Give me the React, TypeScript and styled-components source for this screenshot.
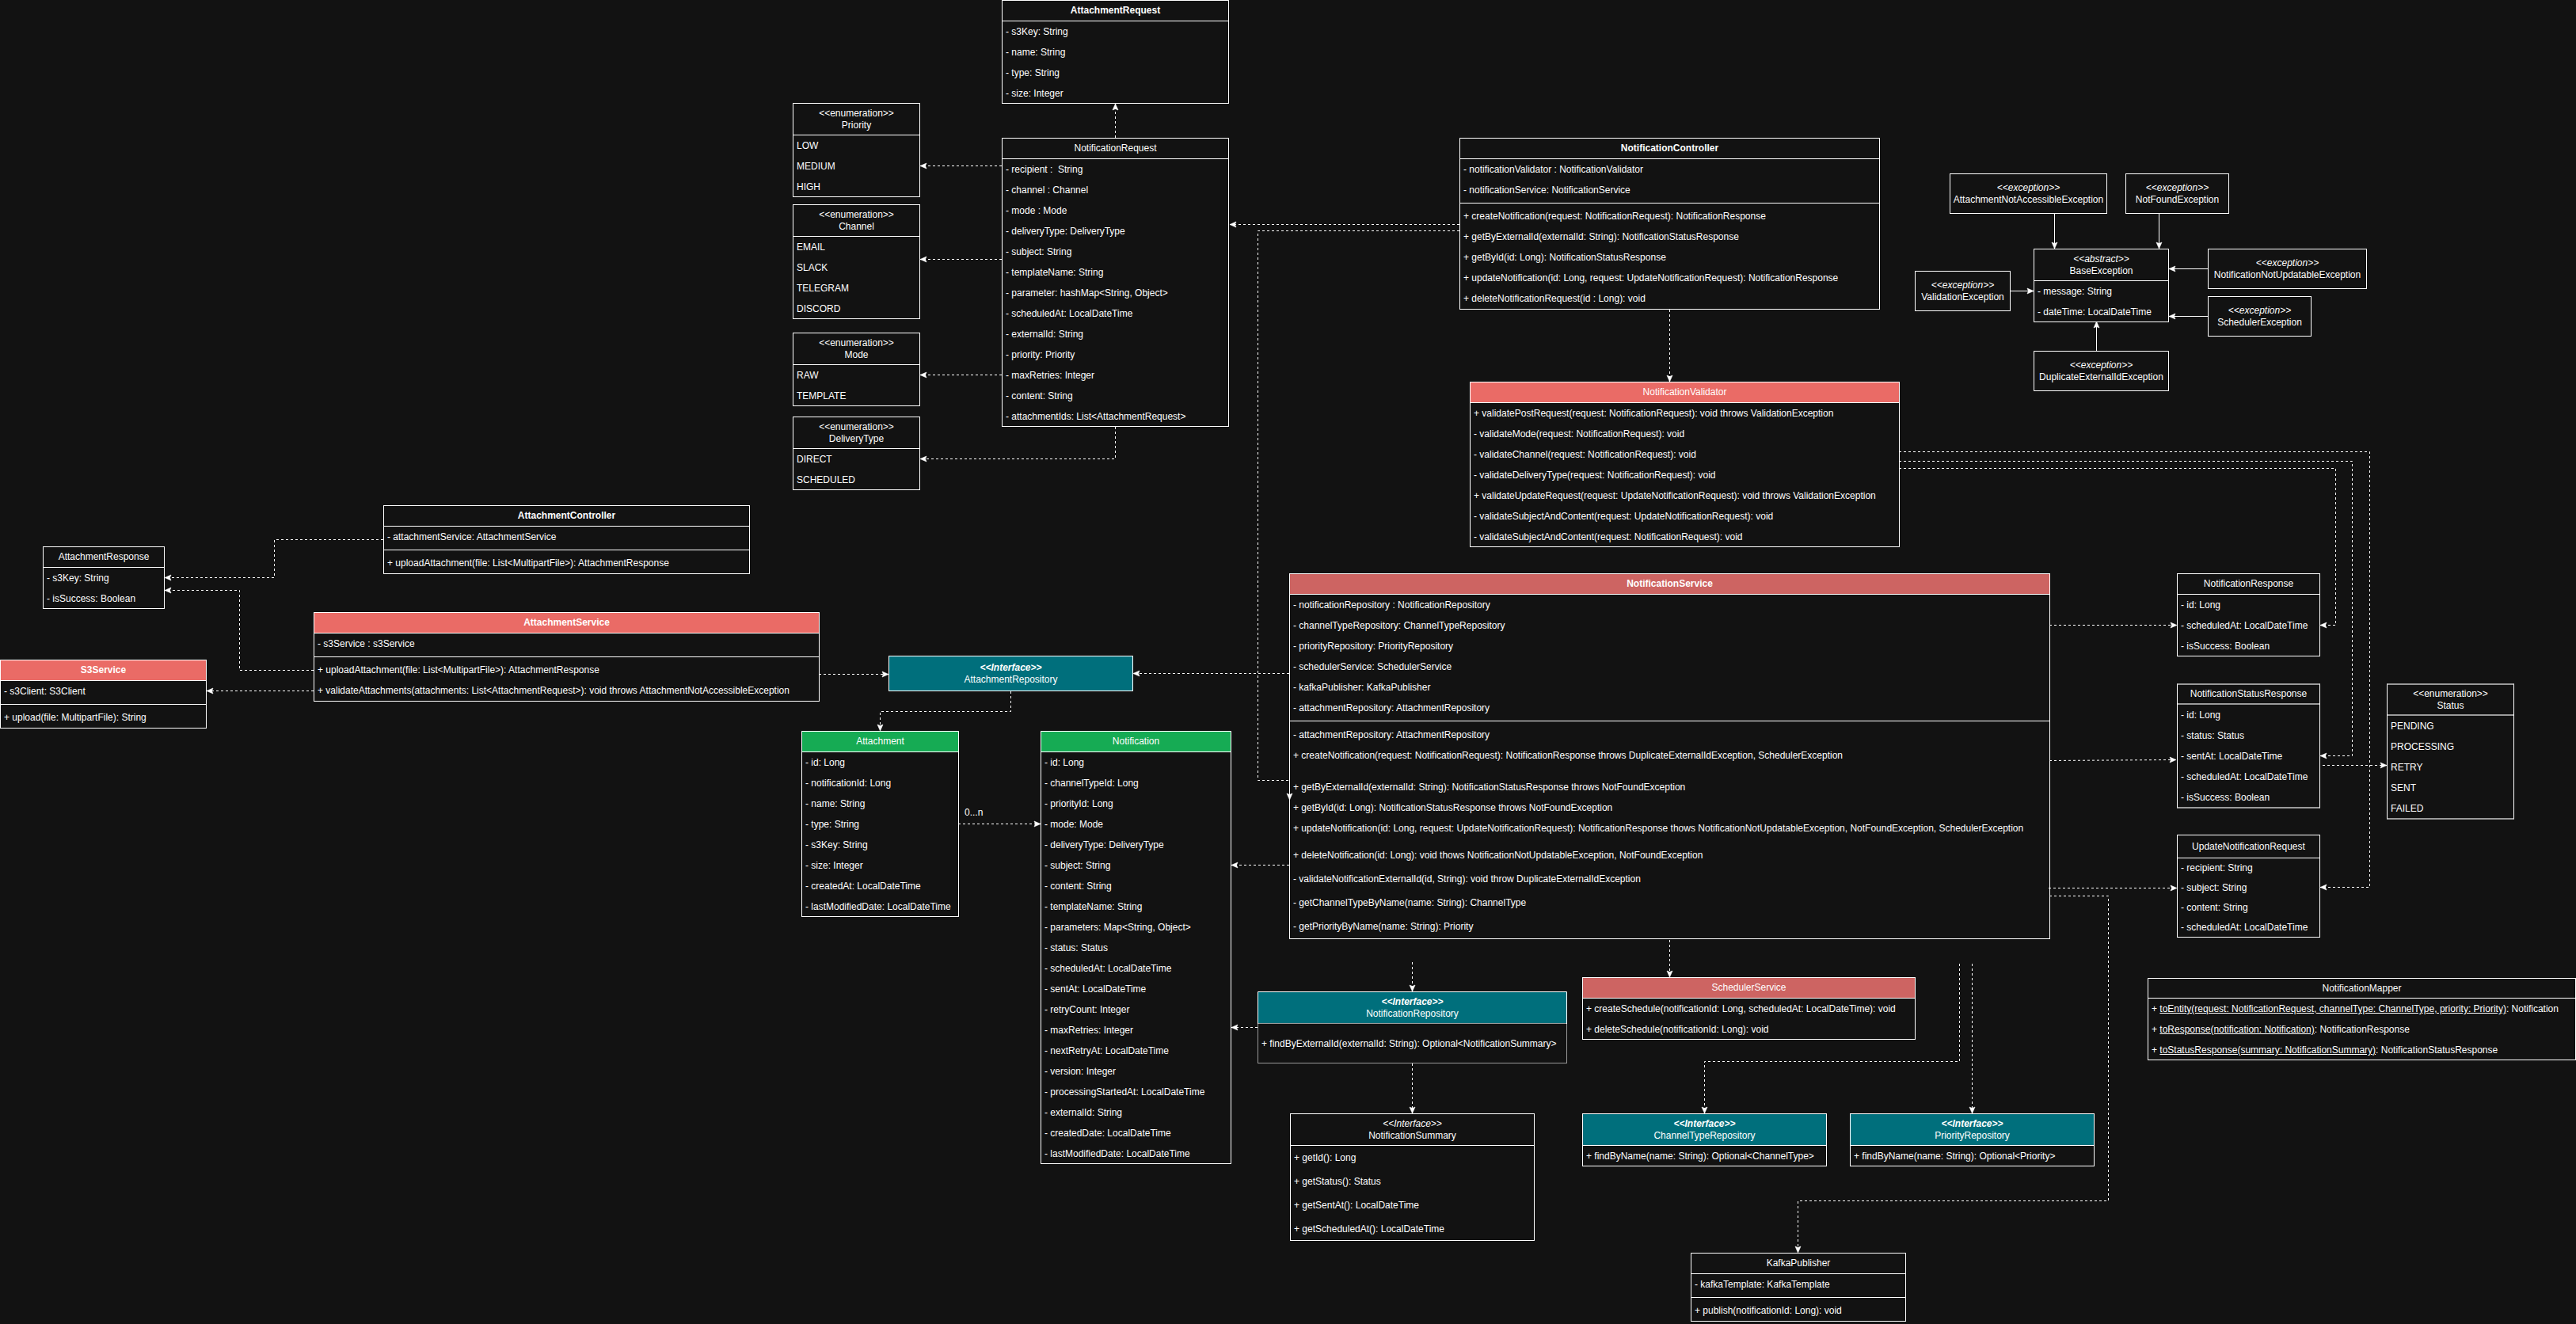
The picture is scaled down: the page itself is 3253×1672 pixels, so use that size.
import React from 'react';
import styled, { createGlobalStyle, css } from 'styled-components';

type Tone = 'plain' | 'red' | 'rust' | 'teal' | 'green';
type Edge = 'solid' | 'soft' | 'dim';

const HEAD_COLORS: Record<Tone, string> = {
  plain: 'transparent',
  red: '#ea6b66',
  rust: '#cd6462',
  teal: '#006f7c',
  green: '#16ab54',
};

const HEAD_RULES: Record<Edge, string> = {
  solid: '1px solid #fff',
  soft: '2px solid #9a9a9a',
  dim: '1px solid #999',
};

const GlobalStyle = createGlobalStyle`
  html, body {
    margin: 0;
    padding: 0;
    background: #121212;
  }
`;

const Canvas = styled.div`
  position: relative;
  width: 3253px;
  height: 1672px;
  overflow: hidden;
  background: #121212;
  color: #fff;
  font-family: "Liberation Sans", Arial, sans-serif;
  font-size: 12px;
`;

const Wires = styled.svg`
  position: absolute;
  inset: 0;
  pointer-events: none;
`;

const Box = styled.div<{ $x: number; $y: number; $w: number; $edge: Edge }>`
  position: absolute;
  left: ${p => p.$x}px;
  top: ${p => p.$y}px;
  width: ${p => p.$w}px;
  box-sizing: border-box;
  display: flex;
  flex-direction: column;
  border: 1px solid #fff;
  background: #121212;
  ${p => p.$edge === 'soft' && css`
    border-top: 2px solid #9a9a9a;
    border-bottom: 2px solid #9a9a9a;
  `}
  ${p => p.$edge === 'dim' && css`
    border-color: #fff #999 #999 #999;
  `}
`;

const Head = styled.div<{ $h: number; $tone: Tone; $bold?: boolean; $edge: Edge; $closed: boolean }>`
  box-sizing: border-box;
  height: ${p => (p.$closed || p.$edge === 'soft' ? p.$h - 1 : p.$h)}px;
  flex: none;
  display: flex;
  flex-direction: column;
  align-items: center;
  justify-content: center;
  line-height: 15px;
  white-space: nowrap;
  background: ${p => HEAD_COLORS[p.$tone]};
  font-weight: ${p => (p.$bold ? 700 : 400)};
  border-bottom: ${p => (p.$closed ? 'none' : HEAD_RULES[p.$edge])};
  ${p => p.$edge === 'dim' && css`
    box-shadow: -1px 0 0 #fff, 1px 0 0 #fff;
  `}
`;

const Stereotype = styled.span<{ $bold?: boolean; $italic?: boolean }>`
  font-style: ${p => (p.$italic ? 'italic' : 'normal')};
  font-weight: ${p => (p.$bold ? 700 : 400)};
`;

const Members = styled.div<{ $tail?: number }>`
  display: flex;
  flex-direction: column;
  padding-bottom: ${p => p.$tail ?? 0}px;

  &:last-child {
    margin-bottom: -1px;
  }

  & + & {
    margin-top: 3px;
    margin-bottom: 0;
    padding-top: 3px;
    border-top: 1px solid #fff;
  }
`;

const Row = styled.div<{ $h: number; $gap?: number }>`
  height: ${p => p.$h}px;
  line-height: ${p => p.$h}px;
  margin-top: ${p => p.$gap ?? 0}px;
  padding-left: 4px;
  white-space: pre;
`;

const Multiplicity = styled.span`
  position: absolute;
  left: 1218px;
  top: 1019px;
  line-height: 15px;
`;

interface ClassBoxProps {
  x: number;
  y: number;
  w: number;
  title: string;
  stereotype?: string;
  stereoItalic?: boolean;
  stereoBold?: boolean;
  head?: number;
  tone?: Tone;
  bold?: boolean;
  edge?: Edge;
  rowH?: number;
  attrs?: React.ReactNode[];
  methods?: React.ReactNode[];
  methodGaps?: number[];
  tail?: number;
}

const ClassBox: React.FC<ClassBoxProps> = ({
  x,
  y,
  w,
  title,
  stereotype,
  stereoItalic,
  stereoBold,
  head = 26,
  tone = 'plain',
  bold,
  edge = 'solid',
  rowH = 26,
  attrs,
  methods,
  methodGaps,
  tail,
}) => {
  const closed = !attrs && !methods;
  return (
    <Box $x={x} $y={y} $w={w} $edge={edge}>
      <Head $h={head} $tone={tone} $bold={bold} $edge={edge} $closed={closed}>
        {stereotype && (
          <Stereotype $italic={stereoItalic} $bold={stereoBold}>
            {stereotype}
          </Stereotype>
        )}
        <span>{title}</span>
      </Head>
      {attrs && (
        <Members>
          {attrs.map((text, i) => (
            <Row key={i} $h={rowH}>{text}</Row>
          ))}
        </Members>
      )}
      {methods && (
        <Members $tail={tail}>
          {methods.map((text, i) => (
            <Row key={i} $h={rowH} $gap={methodGaps?.[i]}>{text}</Row>
          ))}
        </Members>
      )}
    </Box>
  );
};

// every wire ends on the arrow tip
const Wire: React.FC<{ points: [number, number][]; solid?: boolean }> = ({ points, solid }) => {
  const [tx, ty] = points[points.length - 1];
  const [px, py] = points[points.length - 2];
  const len = Math.hypot(tx - px, ty - py);
  const ux = (tx - px) / len;
  const uy = (ty - py) / len;
  const at = (back: number, side: number) =>
    `${tx - ux * back - uy * side},${ty - uy * back + ux * side}`;
  return (
    <g>
      <polyline
        points={points.map(p => p.join(',')).join(' ')}
        fill="none"
        stroke="#fff"
        strokeWidth={1}
        strokeDasharray={solid ? undefined : '3 3'}
      />
      <polygon points={`${tx},${ty} ${at(8, 3.5)} ${at(6.5, 0)} ${at(8, -3.5)}`} fill="#fff" stroke="#fff" strokeWidth={0.6} />
    </g>
  );
};

const DASHED: [number, number][][] = [
  [[1408.5, 174], [1408.5, 131]],
  [[1265, 209.5], [1162, 209.5]],
  [[1265, 327.5], [1162, 327.5]],
  [[1265, 473.5], [1162, 473.5]],
  [[1408.5, 539], [1408.5, 579.5], [1162, 579.5]],
  [[1843, 283.5], [1553, 283.5]],
  [[1843, 291.5], [1588.5, 291.5], [1588.5, 985.5], [1628.5, 985.5], [1628.5, 1010]],
  [[2108.5, 391], [2108.5, 482]],
  [[2398, 570.5], [2992.5, 570.5], [2992.5, 1120.5], [2930, 1120.5]],
  [[2398, 582.5], [2970.5, 582.5], [2970.5, 954.5], [2930, 954.5]],
  [[2398, 591.5], [2949.5, 591.5], [2949.5, 789.5], [2930, 789.5]],
  [[2588, 789.5], [2749, 789.5]],
  [[2588, 960.5], [2748, 959.5]],
  [[2587, 1121.5], [2749, 1121.5]],
  [[2933, 966.5], [3014, 966.5]],
  [[2588, 1131.5], [2662.5, 1131.5], [2662.5, 1516.5], [2270.5, 1516.5], [2270.5, 1582]],
  [[2108.5, 1187], [2108.5, 1234]],
  [[1783.5, 1215], [1783.5, 1252]],
  [[1783.5, 1343], [1783.5, 1406]],
  [[2474.5, 1217], [2474.5, 1340.5], [2152.5, 1340.5], [2152.5, 1406]],
  [[2490.5, 1217], [2490.5, 1406]],
  [[1628, 850.5], [1431, 850.5]],
  [[1034, 851.5], [1122, 851.5]],
  [[1276.5, 873], [1276.5, 898.5], [1111.5, 898.5], [1111.5, 923]],
  [[1210, 1040.5], [1314, 1040.5]],
  [[1628, 1092.5], [1555, 1092.5]],
  [[1588, 1297.5], [1555, 1297.5]],
  [[484, 681.5], [346.5, 681.5], [346.5, 729.5], [208, 729.5]],
  [[396, 846.5], [302.5, 846.5], [302.5, 745.5], [208, 745.5]],
  [[396, 872.5], [261, 872.5]],
];

const SOLID: [number, number][][] = [
  [[2594.5, 269], [2594.5, 314]],
  [[2726.5, 269], [2726.5, 314]],
  [[2788, 339.5], [2739, 339.5]],
  [[2788, 399.5], [2739, 399.5]],
  [[2538, 367.5], [2568, 367.5]],
  [[2647.5, 443], [2647.5, 406]],
];

const App: React.FC = () => (
  <Canvas>
    <GlobalStyle />

    {/* request models and enums */}
    <ClassBox x={1265} y={0} w={287} title="AttachmentRequest" bold
      attrs={['- s3Key: String', '- name: String', '- type: String', '- size: Integer']} />
    <ClassBox x={1265} y={174} w={287} title="NotificationRequest"
      attrs={[
        '- recipient :  String',
        '- channel : Channel',
        '- mode : Mode',
        '- deliveryType: DeliveryType',
        '- subject: String',
        '- templateName: String',
        '- parameter: hashMap<String, Object>',
        '- scheduledAt: LocalDateTime',
        '- externalId: String',
        '- priority: Priority',
        '- maxRetries: Integer',
        '- content: String',
        '- attachmentIds: List<AttachmentRequest>',
      ]} />
    <ClassBox x={1001} y={130} w={161} head={40} stereotype="<<enumeration>>" title="Priority"
      attrs={['LOW', 'MEDIUM', 'HIGH']} />
    <ClassBox x={1001} y={258} w={161} head={40} stereotype="<<enumeration>>" title="Channel"
      attrs={['EMAIL', 'SLACK', 'TELEGRAM', 'DISCORD']} />
    <ClassBox x={1001} y={420} w={161} head={40} stereotype="<<enumeration>>" title="Mode"
      attrs={['RAW', 'TEMPLATE']} />
    <ClassBox x={1001} y={526} w={161} head={40} stereotype="<<enumeration>>" title="DeliveryType"
      attrs={['DIRECT', 'SCHEDULED']} />

    {/* attachment side */}
    <ClassBox x={484} y={638} w={463} title="AttachmentController" bold
      attrs={['- attachmentService: AttachmentService']}
      methods={['+ uploadAttachment(file: List<MultipartFile>): AttachmentResponse']} />
    <ClassBox x={54} y={690} w={154} title="AttachmentResponse"
      attrs={['- s3Key: String', '- isSuccess: Boolean']} />
    <ClassBox x={396} y={773} w={639} title="AttachmentService" tone="red" bold
      attrs={['- s3Service : s3Service']}
      methods={[
        '+ uploadAttachment(file: List<MultipartFile>): AttachmentResponse',
        '+ validateAttachments(attachments: List<AttachmentRequest>): void throws AttachmentNotAccessibleException',
      ]} />
    <ClassBox x={0} y={833} w={261} title="S3Service" tone="red" bold
      attrs={['- s3Client: S3Client']}
      methods={['+ upload(file: MultipartFile): String']} />
    <ClassBox x={1122} y={828} w={309} head={44} tone="teal" stereotype="<<Interface>>" stereoItalic stereoBold
      title="AttachmentRepository" />
    <ClassBox x={1012} y={923} w={199} title="Attachment" tone="green"
      attrs={[
        '- id: Long',
        '- notificationId: Long',
        '- name: String',
        '- type: String',
        '- s3Key: String',
        '- size: Integer',
        '- createdAt: LocalDateTime',
        '- lastModifiedDate: LocalDateTime',
      ]} />
    <ClassBox x={1314} y={923} w={241} title="Notification" tone="green"
      attrs={[
        '- id: Long',
        '- channelTypeId: Long',
        '- priorityId: Long',
        '- mode: Mode',
        '- deliveryType: DeliveryType',
        '- subject: String',
        '- content: String',
        '- templateName: String',
        '- parameters: Map<String, Object>',
        '- status: Status',
        '- scheduledAt: LocalDateTime',
        '- sentAt: LocalDateTime',
        '- retryCount: Integer',
        '- maxRetries: Integer',
        '- nextRetryAt: LocalDateTime',
        '- version: Integer',
        '- processingStartedAt: LocalDateTime',
        '- externalId: String',
        '- createdDate: LocalDateTime',
        '- lastModifiedDate: LocalDateTime',
      ]} />
    <Multiplicity>0...n</Multiplicity>

    {/* notification api */}
    <ClassBox x={1843} y={174} w={531} title="NotificationController" bold
      attrs={['- notificationValidator : NotificationValidator', '- notificationService: NotificationService']}
      methods={[
        '+ createNotification(request: NotificationRequest): NotificationResponse',
        '+ getByExternalId(externalId: String): NotificationStatusResponse',
        '+ getById(id: Long): NotificationStatusResponse',
        '+ updateNotification(id: Long, request: UpdateNotificationRequest): NotificationResponse',
        '+ deleteNotificationRequest(id : Long): void',
      ]} />
    <ClassBox x={1856} y={482} w={543} title="NotificationValidator" tone="red"
      attrs={[
        '+ validatePostRequest(request: NotificationRequest): void throws ValidationException',
        '- validateMode(request: NotificationRequest): void',
        '- validateChannel(request: NotificationRequest): void',
        '- validateDeliveryType(request: NotificationRequest): void',
        '+ validateUpdateRequest(request: UpdateNotificationRequest): void throws ValidationException',
        '- validateSubjectAndContent(request: UpdateNotificationRequest): void',
        '- validateSubjectAndContent(request: NotificationRequest): void',
      ]} />
    <ClassBox x={1628} y={724} w={961} title="NotificationService" tone="rust" bold
      attrs={[
        '- notificationRepository : NotificationRepository',
        '- channelTypeRepository: ChannelTypeRepository',
        '- priorityRepository: PriorityRepository',
        '- schedulerService: SchedulerService',
        '- kafkaPublisher: KafkaPublisher',
        '- attachmentRepository: AttachmentRepository',
      ]}
      methods={[
        '- attachmentRepository: AttachmentRepository',
        '+ createNotification(request: NotificationRequest): NotificationResponse throws DuplicateExternalIdException, SchedulerException',
        '+ getByExternalId(externalId: String): NotificationStatusResponse throws NotFoundException',
        '+ getById(id: Long): NotificationStatusResponse throws NotFoundException',
        '+ updateNotification(id: Long, request: UpdateNotificationRequest): NotificationResponse thows NotificationNotUpdatableException, NotFoundException, SchedulerException',
        '+ deleteNotification(id: Long): void thows NotificationNotUpdatableException, NotFoundException',
        '- validateNotificationExternalId(id, String): void throw DuplicateExternalIdException',
        '- getChannelTypeByName(name: String): ChannelType',
        '- getPriorityByName(name: String): Priority',
      ]}
      methodGaps={[1, 0, 14, 0, 0, 8, 4, 4, 4]}
      tail={2} />

    {/* exceptions */}
    <ClassBox x={2462} y={219} w={199} head={50} stereotype="<<exception>>" stereoItalic title="AttachmentNotAccessibleException" />
    <ClassBox x={2684} y={219} w={131} head={50} stereotype="<<exception>>" stereoItalic title="NotFoundException" />
    <ClassBox x={2568} y={314} w={171} head={40} stereotype="<<abstract>>" stereoItalic title="BaseException"
      attrs={['- message: String', '- dateTime: LocalDateTime']} />
    <ClassBox x={2418} y={342} w={121} head={50} stereotype="<<exception>>" stereoItalic title="ValidationException" />
    <ClassBox x={2788} y={314} w={201} head={50} stereotype="<<exception>>" stereoItalic title="NotificationNotUpdatableException" />
    <ClassBox x={2788} y={374} w={131} head={50} stereotype="<<exception>>" stereoItalic title="SchedulerException" />
    <ClassBox x={2568} y={443} w={171} head={50} stereotype="<<exception>>" stereoItalic title="DuplicateExternalIdException" />

    {/* responses */}
    <ClassBox x={2749} y={724} w={181} title="NotificationResponse"
      attrs={['- id: Long', '- scheduledAt: LocalDateTime', '- isSuccess: Boolean']} />
    <ClassBox x={2749} y={863} w={181} edge="soft" title="NotificationStatusResponse"
      attrs={['- id: Long', '- status: Status', '- sentAt: LocalDateTime', '- scheduledAt: LocalDateTime', '- isSuccess: Boolean']} />
    <ClassBox x={2749} y={1054} w={181} head={29} rowH={25} title="UpdateNotificationRequest"
      attrs={['- recipient: String', '- subject: String', '- content: String', '- scheduledAt: LocalDateTime']} />
    <ClassBox x={3014} y={863} w={161} head={40} edge="soft" stereotype="<<enumeration>>" title="Status"
      attrs={['PENDING', 'PROCESSING', 'RETRY', 'SENT', 'FAILED']} />
    <ClassBox x={2712} y={1235} w={541} head={25} title="NotificationMapper"
      attrs={[
        <>+ <u>toEntity(request: NotificationRequest, channelType: ChannelType, priority: Priority)</u>: Notification</>,
        <>+ <u>toResponse(notification: Notification)</u>: NotificationResponse</>,
        <>+ <u>toStatusResponse(summary: NotificationSummary)</u>: NotificationStatusResponse</>,
      ]} />

    {/* repositories and publishers */}
    <ClassBox x={1588} y={1252} w={391} head={40} tone="teal" edge="dim" rowH={50}
      stereotype="<<Interface>>" stereoItalic stereoBold title="NotificationRepository"
      attrs={['+ findByExternalId(externalId: String): Optional<NotificationSummary>']} />
    <ClassBox x={1998} y={1234} w={421} title="SchedulerService" tone="rust"
      attrs={[
        '+ createSchedule(notificationId: Long, scheduledAt: LocalDateTime): void',
        '+ deleteSchedule(notificationId: Long): void',
      ]} />
    <ClassBox x={1629} y={1406} w={309} head={40} rowH={30} stereotype="<<Interface>>" stereoItalic title="NotificationSummary"
      attrs={['+ getId(): Long', '+ getStatus(): Status', '+ getSentAt(): LocalDateTime', '+ getScheduledAt(): LocalDateTime']} />
    <ClassBox x={1998} y={1406} w={309} head={40} tone="teal" stereotype="<<Interface>>" stereoItalic stereoBold title="ChannelTypeRepository"
      attrs={['+ findByName(name: String): Optional<ChannelType>']} />
    <ClassBox x={2336} y={1406} w={309} head={40} tone="teal" stereotype="<<Interface>>" stereoItalic stereoBold title="PriorityRepository"
      attrs={['+ findByName(name: String): Optional<Priority>']} />
    <ClassBox x={2135} y={1582} w={272} title="KafkaPublisher"
      attrs={['- kafkaTemplate: KafkaTemplate']}
      methods={['+ publish(notificationId: Long): void']} />

    <Wires width={3253} height={1672}>
      {DASHED.map((points, i) => (
        <Wire key={i} points={points} />
      ))}
      {SOLID.map((points, i) => (
        <Wire key={i} points={points} solid />
      ))}
    </Wires>
  </Canvas>
);

export default App;
